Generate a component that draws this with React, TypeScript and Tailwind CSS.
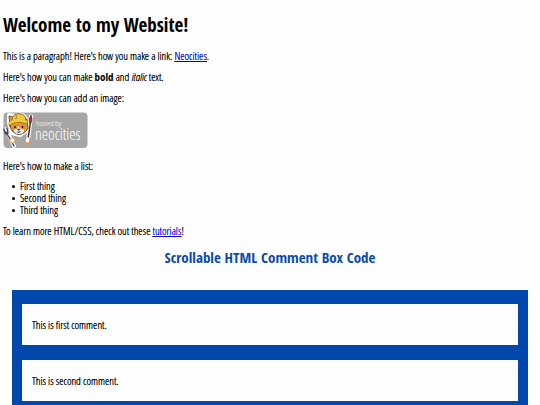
import React from "react";

const comments = ["This is first comment.", "This is second comment."];
const things = ["First thing", "Second thing", "Third thing"];

function NeocitiesBadge() {
  return (
    <svg viewBox="0 0 85 37" className="block h-[37px] w-[85px] text-shadow-none" role="img" aria-label="hosted by neocities">
      <rect x="0.5" y="0.5" width="84" height="35.5" rx="4" fill="#a6a6a6" />
      <g stroke="#fff" strokeWidth="4" fill="#fff" strokeLinejoin="round" strokeLinecap="round">
        <path d="M6 11 L6 3 L12 4 Q17 1 21 4 L24 8 L24 18 L17 23 L9 21Z" />
        <path d="M28 4 L25 28 M3 17 L11 34" />
      </g>
      <g strokeLinejoin="round" strokeLinecap="round">
        <path d="M7 14 L6 4 Q9 4 11 6 Q16 4 21 8 L24 7 L25 16 Q22 22 16 22.500 Q9 22 7 14Z" fill="#ec922d" stroke="#443322" strokeWidth="0.800" />
        <path d="M15 14 L14 17 Q10 17 11 19 Q12 22 16 22 Q20 22 21 19 Q21 17 18 17Z" fill="#fff" />
        <path d="M9 8 Q9 2 16 1.500 Q23 2 23 9 Q17 7 9 11Z" fill="#f4c83d" stroke="#6d5423" strokeWidth="0.800" />
        <path d="M6 12 Q13 7 23 10" fill="none" stroke="#f4c83d" strokeWidth="3" />
        <path d="M6 13.500 Q13 8.500 23 11.500 M13 3 Q14 5 13 7" fill="none" stroke="#6d5423" strokeWidth="0.600" />
        <ellipse cx="12" cy="15" rx="0.900" ry="1.300" fill="#222" />
        <ellipse cx="19.500" cy="15" rx="0.900" ry="1.300" fill="#222" />
        <path d="M14.700 17 L17 17 L16 18.300Z M14 20 Q16 21 18 19.500" fill="#222" stroke="#222" strokeWidth="0.600" />
        <path d="M27.500 10 L25 27" stroke="#303030" strokeWidth="1.500" />
        <path d="M28 3 Q25 7 26.500 11 L28 11 Q30 7 28 3Z" fill="#bd2d35" stroke="#4b2525" strokeWidth="0.600" />
        <path d="M3 20 L11 34 M1 17 L2 21 Q4 23 5 21 L4 16" fill="none" stroke="#454545" strokeWidth="1.400" />
        <ellipse cx="24.500" cy="28" rx="2.300" ry="3" fill="#fff" stroke="#e3912f" strokeWidth="0.800" />
        <ellipse cx="9.500" cy="28.500" rx="2.600" ry="2.600" fill="#fff" stroke="#e3912f" strokeWidth="0.800" />
      </g>
      <text x="33" y="14" fill="#fff" className="text-[8px]">hosted by</text>
      <text x="32" y="28" fill="#fff" className="text-[16px]">neocities</text>
    </svg>
  );
}

export default function App() {
  return (
    <main className="flex h-screen flex-col overflow-hidden bg-[#fefefe] px-[3px] pt-3 font-['Open_Sans_Condensed_Light','Open_Sans',sans-serif] text-[11px] leading-[11px] text-black [text-shadow:0_0_0_currentColor]">
      <h1 className="mb-[11px] font-['Open_Sans_Condensed',sans-serif] text-[19px] leading-[27px] font-bold text-shadow-none">Welcome to my Website!</h1>
      <div className="flex flex-col gap-[10px]">
        <p>
          This is a paragraph! Here's how you make a link:{" "}
          <a href="#neocities" className="text-[#0000ee] underline">Neocities</a>.
        </p>
        <p>
          Here's how you can make <strong className="font-['Open_Sans_Condensed',sans-serif] text-shadow-none">bold</strong> and <em>italic</em> text.
        </p>
        <p>Here's how you can add an image:</p>
      </div>
      <div className="mt-[9px] mb-[11px]"><NeocitiesBadge /></div>
      <p>Here's how to make a list:</p>
      <ul className="my-[9px] pl-[9px] leading-[12px]">
        {things.map((thing) => (
          <li key={thing} className="flex items-center gap-[5px] before:size-[3px] before:rounded-full before:bg-black">{thing}</li>
        ))}
      </ul>
      <p>
        To learn more HTML/CSS, check out these{" "}
        <a href="#tutorials" className="text-[#0000ee] underline">tutorials</a>!
      </p>
      <h2 className="mt-3 mb-6 text-center font-['Open_Sans_Condensed',sans-serif] text-[15px] leading-[18px] font-bold text-[#0b4ba8] text-shadow-none">
        Scrollable HTML Comment Box Code
      </h2>
      <section aria-label="Comments" className="mx-[9px] flex min-h-0 flex-1 flex-col gap-[15px] overflow-hidden bg-[#0048ab] px-[10px] py-[14px]">
        {comments.map((comment) => (
          <p key={comment} className="shrink-0 bg-[#fefefe] px-[10px] py-[15px]">{comment}</p>
        ))}
      </section>
    </main>
  );
}
